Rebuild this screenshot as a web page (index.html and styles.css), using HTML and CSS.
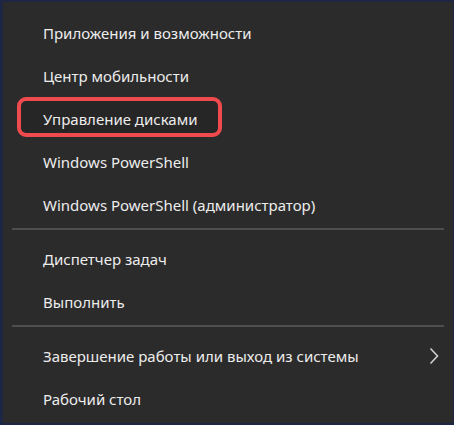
FILE: index.html
```html
<!DOCTYPE html>
<html lang="ru">
<head>
  <meta charset="UTF-8">
  <meta name="viewport" content="width=device-width, initial-scale=1.0">
  <title>Меню Win+X</title>
  <link rel="stylesheet" href="styles.css">
</head>
<body>
  <div class="menu">
    <div class="menuItem">Приложения и возможности</div>
    <div class="menuItem">Центр мобильности</div>
    <div class="menuItem highlighted">Управление дисками</div>
    <div class="menuItem">Windows PowerShell</div>
    <div class="menuItem">Windows PowerShell (администратор)</div>
    <div class="separator"></div>
    <div class="menuItem">Диспетчер задач</div>
    <div class="menuItem">Выполнить</div>
    <div class="separator"></div>
    <div class="menuItem hasSub">
      Завершение работы или выход из системы
      <svg class="chevron" width="10" height="18" viewBox="0 0 10 18">
        <path d="M1.5 1.5 L8.5 9 L1.5 16.5" fill="none" stroke="#cfcfcf" stroke-width="1.6"/>
      </svg>
    </div>
    <div class="menuItem">Рабочий стол</div>
  </div>
</body>
</html>
```

FILE: styles.css
```css
html, body {
  margin: 0;
  background-color: #1d2745;
}
.menu {
  width: calc(100% - 4px);
  height: 421px;
  box-sizing: border-box;
  margin-left: 3px;
  margin-top: 2px;
  padding: 9px 0 0 0;
  background-color: #2b2b2b;
  font-family: "Noto Sans", "Open Sans", sans-serif;
  font-size: 15px;
  color: #ededed;
}
.menuItem {
  height: 43px;
  display: flex;
  align-items: center;
  padding-left: 40px;
  position: relative;
}
.highlighted {
  isolation: isolate;
}
.highlighted::before {
  content: "";
  position: absolute;
  left: 14px;
  top: 0;
  width: 197px;
  height: 32px;
  border: 4px solid #ef4a4e;
  border-radius: 9px;
  background-color: #262626;
  z-index: -1;
}
.hasSub {
  justify-content: space-between;
  padding-right: 14px;
}
.separator {
  height: 2px;
  margin: 2px 9px 7px 9px;
  background-color: #4e4e4e;
}
```
